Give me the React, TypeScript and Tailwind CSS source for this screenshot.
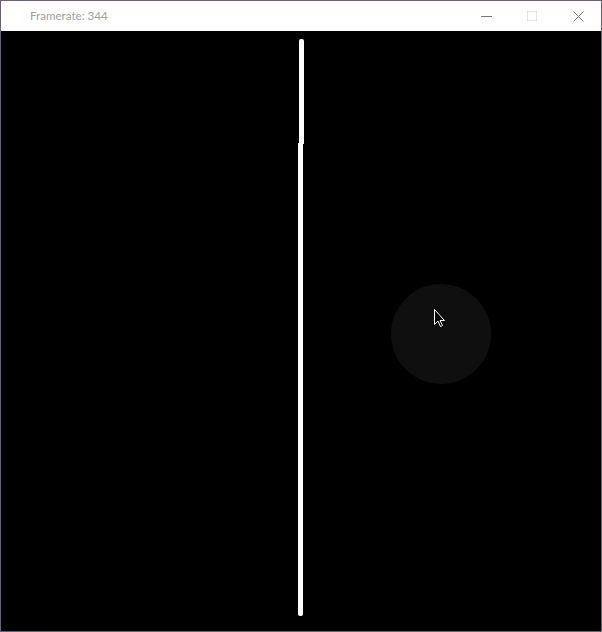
export default function App() {
  return (
    <div className="w-[602px] h-[632px] border border-[#6e5d80] flex flex-col bg-white">
      <div className="h-[30px] flex items-center justify-between bg-white">
        <span
          className="ml-[29px] text-[11.6px] text-[#a0a0a0]"
          style={{ fontFamily: 'Lato, "Noto Sans", sans-serif' }}
        >
          Framerate: 344
        </span>
        <div className="flex items-center h-full">
          <div className="w-[46px] h-full flex items-center justify-center">
            <div className="w-[11px] h-px bg-[#777]" />
          </div>
          <div className="w-[46px] h-full flex items-center justify-center">
            <div className="w-[10px] h-[10px] border border-[#dde3e8]" />
          </div>
          <div className="w-[46px] h-full flex items-center justify-center">
            <svg width="11" height="11" viewBox="0 0 11 11">
              <path d="M0.5 0.5L10.5 10.5M10.5 0.5L0.5 10.5" stroke="#777" strokeWidth="1" />
            </svg>
          </div>
        </div>
      </div>
      <div className="relative flex-1 bg-black overflow-hidden">
        <div className="absolute left-[298px] top-[8px] w-[5px] h-[105px] bg-white rounded-t-[2px]" />
        <div className="absolute left-[297px] top-[112px] w-[5px] h-[473px] bg-white rounded-b-[2px]" />
        <div className="absolute left-[390px] top-[253px] w-[100px] h-[100px] rounded-full bg-[#0f0f0f]" />
        <svg className="absolute left-[433px] top-[278px]" width="12" height="19" viewBox="0 0 12 19">
          <path
            d="M0.5 0.5L0.5 15.5L4 12L6.5 17.5L8.5 16.5L6 11.5L10.5 11.5Z"
            fill="#000"
            stroke="#fff"
            strokeWidth="1"
            strokeLinejoin="miter"
          />
        </svg>
      </div>
    </div>
  );
}
